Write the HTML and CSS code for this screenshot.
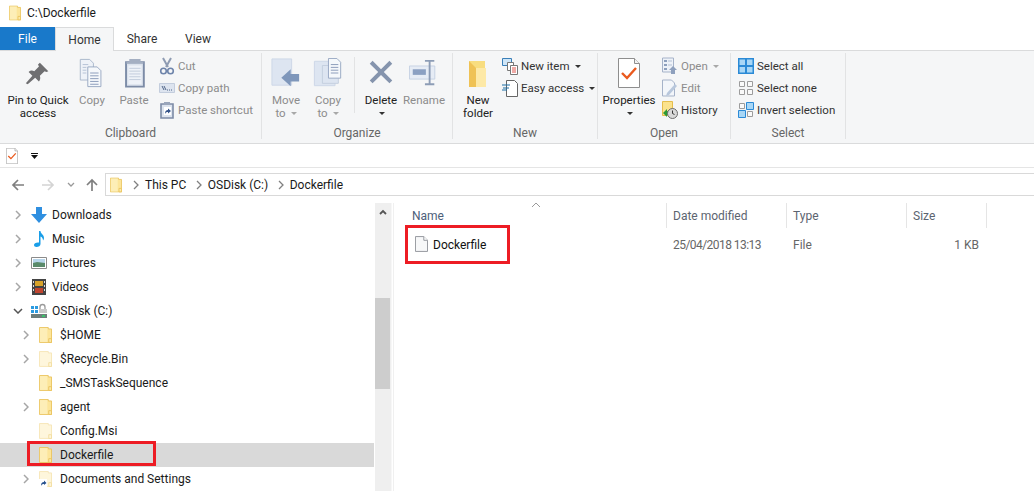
FILE: index.html
```html
<!DOCTYPE html>
<html lang="en">
<head>
<meta charset="utf-8">
<title>C:\Dockerfile</title>
<link rel="stylesheet" href="styles.css">
</head>
<body>
<svg class="defs" width="0" height="0" aria-hidden="true">
  <defs>
    <symbol id="folder" viewBox="0 0 14 17">
      <path d="M.5.5h9.500v1.500h3.500v14.500H.5z" fill="#fce59a" stroke="#eac45e"/>
      <path d="M1 1h8v15H1z" fill="#fdeeb7"/>
      <path d="M10.500 12.500h3v4h-3z" fill="#fce9a9" stroke="#eac45e"/>
    </symbol>
    <symbol id="folder-dim" viewBox="0 0 14 17">
      <path d="M.5.5h9.500v1.500h3.500v14.500H.5z" fill="#fef6dc" stroke="#f6e5b5"/>
      <path d="M10.500 12.500h3v4h-3z" fill="#fef6dc" stroke="#f2dda0"/>
    </symbol>
    <symbol id="page" viewBox="0 0 14 17">
      <path d="M.5.5h9l4 4v12H.5z" fill="#f7f8f9" stroke="#8f9298"/>
      <path d="M9.500.5v4h4" fill="#fff" stroke="#8f9298"/>
    </symbol>
    <symbol id="props" viewBox="0 0 22 30">
      <path d="M.5.5h16l5 5v24H.5z" fill="#fff" stroke="#8e8e8e"/>
      <path d="M16.500.5v5h5" fill="#f2f2f2" stroke="#8e8e8e"/>
      <path d="M4 15l5 5 9-10" fill="none" stroke="#ea5a1e" stroke-width="2.400"/>
    </symbol>
  </defs>
</svg>

<header class="title">
  <svg class="i-title"><use href="#folder"/></svg>
  <span>C:\Dockerfile</span>
</header>

<nav class="tabs">
  <span class="tab file">File</span>
  <span class="tab home">Home</span>
  <span class="tab share">Share</span>
  <span class="tab view">View</span>
</nav>

<section class="ribbon">
  <div class="group g-clip">
    <div class="body">
      <div class="big w-pin">
        <svg class="ico" viewBox="0 0 32 32"><path d="M18 5l9 9-2 1-2-1-5 5c1 3 0 5-1 6l-4-4-8 7-2-1 7-8-4-4c2-2 4-2 6-1l5-5-1-2z" fill="#6f6f71"/></svg>
        <span class="lbl">Pin to Quick<br>access</span>
      </div>
      <div class="big w-copy off">
        <svg class="ico" viewBox="0 0 32 32"><path d="M3.500 1.500h10l4 4v18h-14z" fill="#eef2f8" stroke="#a9b6cb"/><path d="M11.500 9.500h10l4 4v17h-14z" fill="#f5f8fb" stroke="#98a8c2"/><path d="M14 16h9M14 19h9M14 22h9M14 25h9M14 28h9" stroke="#8799b7"/><path d="M6 7h6M6 10h4M6 13h4M6 16h4" stroke="#b3c0d4"/></svg>
        <span class="lbl">Copy</span>
      </div>
      <div class="big w-paste off">
        <svg class="ico" viewBox="0 0 32 32"><path d="M7.500 4.500h19v26h-19z" fill="#dbe2ec" stroke="#7c8ba6" stroke-width="2"/><path d="M11 1h12v3h3v2H8V4h3z" fill="#a4afc2"/><path d="M10 8h14v20H10z" fill="#eef2f8"/><path d="M11 11h12M11 14h12M11 17h12M11 20h12M11 23h12" stroke="#c1cbdb"/></svg>
        <span class="lbl">Paste</span>
      </div>
      <ul class="list off l-clip">
        <li>
          <svg class="sm" viewBox="0 0 16 18"><path d="M4 1l5 9M12 1L7 10" stroke="#8f9cb3" stroke-width="2" fill="none"/><circle cx="4.500" cy="14" r="2.800" fill="none" stroke="#6f85ab" stroke-width="1.600"/><circle cx="11.500" cy="14" r="2.800" fill="none" stroke="#6f85ab" stroke-width="1.600"/></svg>
          <span>Cut</span>
        </li>
        <li>
          <svg class="sm" viewBox="0 0 16 18"><path d="M.5 4.500h15v9H.5z" fill="#dde4ef" stroke="#c3cddd"/><path d="M3 7l2 4M5 7l2 4M8 11h1M10 11h1M12 11h1" stroke="#4f6488"/></svg>
          <span>Copy path</span>
        </li>
        <li>
          <svg class="sm" viewBox="0 0 16 18"><path d="M2 3h12v14H2z" fill="#dce3ee" stroke="#7c8ba6" stroke-width="1.600"/><path d="M5 1h6v3H5z" fill="#9aa6bb"/><path d="M5 6h7v8H5z" fill="#fff"/><path d="M6 13c0-3 1-4 3-4V7.500l3 2.500-3 2.500V11c-1 0-2 0-3 2z" fill="#34538a"/></svg>
          <span>Paste shortcut</span>
        </li>
      </ul>
    </div>
    <div class="name">Clipboard</div>
  </div>

  <div class="group g-org">
    <div class="body">
      <div class="big w-move off">
        <svg class="ico" viewBox="0 0 32 32"><path d="M1 1h21v28H1z" fill="#dde5f1" stroke="#ccd6e6"/><path d="M11 21l10-9v5h9v8h-9v5z" fill="#7f97bb"/></svg>
        <span class="lbl">Move<br>to <i class="caret"></i></span>
      </div>
      <div class="big w-copyto off">
        <svg class="ico" viewBox="0 0 32 32"><path d="M1.500 3.500h22v26h-22z" fill="#dde5f1" stroke="#ccd6e6"/><path d="M10 8h17v19H10z" fill="#dde5f1" stroke="#c3cede"/><path d="M16.500.5h9l4 4v17h-13z" fill="#f5f8fb" stroke="#98a8c2"/><path d="M19 7h8M19 10h8M19 13h8M19 16h8" stroke="#8799b7"/></svg>
        <span class="lbl">Copy<br>to <i class="caret"></i></span>
      </div>
      <span class="vsep"></span>
      <div class="big w-del">
        <svg class="ico" viewBox="0 0 32 32"><path d="M5 7l3-3 9 9 9-9 3 3-9 9 9 9-3 3-9-9-9 9-3-3 9-9z" transform="translate(-1 -1)" fill="#8594ad"/></svg>
        <span class="lbl">Delete<br><i class="caret dark"></i></span>
      </div>
      <div class="big w-ren off">
        <svg class="ico" viewBox="0 0 32 32"><path d="M.5 8.500h27v14H.5z" fill="#e6ecf5" stroke="#c5d1e2"/><path d="M4 12h14v6H4z" fill="#8ba0c2"/><path d="M17 3h5v25h-5M27 3h-5M27 28h-5" fill="none" stroke="#8d9db6" stroke-width="2"/></svg>
        <span class="lbl">Rename</span>
      </div>
    </div>
    <div class="name">Organize</div>
  </div>

  <div class="group g-new">
    <div class="body">
      <div class="big w-folder">
        <svg class="ico folder-big" viewBox="0 0 20 28"><path d="M1 1h16v26H1z" fill="#f8dd7f"/><path d="M7 8l11 0v19H7z" fill="#fde9a7"/><path d="M1 1l7 7v19L1 27z" fill="#efc255"/></svg>
        <span class="lbl">New<br>folder</span>
      </div>
      <ul class="list l-new">
        <li>
          <svg class="sm" viewBox="0 0 16 18"><path d="M.5 1.500h9v7h-9z" fill="#cfe6f8" stroke="#3a7fb8"/><path d="M5.500 5.500h6v8h-6z" fill="#fff" stroke="#777"/><path d="M8.500 8.500h7v9h-7z" fill="#fff" stroke="#777"/><path d="M10 11h4M10 13h4M10 15h4" stroke="#e0544d"/></svg>
          <span>New item</span><i class="caret dark"></i>
        </li>
        <li>
          <svg class="sm" viewBox="0 0 16 18"><path d="M4.500 1.500h8l3 3v13h-11z" fill="#fff" stroke="#666"/><path d="M0 6h8M1 9h6M0 11h5" stroke="#1d6fa5" stroke-width="1.200"/></svg>
          <span>Easy access</span><i class="caret dark"></i>
        </li>
      </ul>
    </div>
    <div class="name">New</div>
  </div>

  <div class="group g-open">
    <div class="body">
      <div class="big w-props">
        <svg class="ico props-big"><use href="#props"/></svg>
        <span class="lbl">Properties<br><i class="caret dark"></i></span>
      </div>
      <ul class="list l-open">
        <li class="off">
          <svg class="sm" viewBox="0 0 16 18"><path d="M.5 1h11v14H.5z" fill="#eef2f8" stroke="#a6b3c9"/><path d="M2 3h3v2H2zM2 7h3v2H2zM2 11h3v2H2z" fill="#8ea0bd"/><path d="M6 4h4M6 8h4" stroke="#b3c0d4"/><path d="M11 9l4 4h-2v4h-4v-4H7z" fill="#8ea0bd"/></svg>
          <span>Open</span><i class="caret"></i>
        </li>
        <li class="off">
          <svg class="sm" viewBox="0 0 16 18"><path d="M.5 1h9l3 3v13H.5z" fill="#f3f6fa" stroke="#a6b3c9"/><path d="M5 14l8-9 2 2-8 9-3 1z" fill="#b8c7dc"/></svg>
          <span>Edit</span>
        </li>
        <li>
          <svg class="sm" viewBox="0 0 16 18"><path d="M.5 .5h10v14H.5z" fill="#fbe28c" stroke="#e5bd4c"/><path d="M1 12l4-4v2h3v4H5v2z" fill="#2b9a35"/><circle cx="10.500" cy="12.500" r="5" fill="#d8d8d8" stroke="#6c6c6c"/><path d="M10.500 9.500v3l2 1" fill="none" stroke="#333"/></svg>
          <span>History</span>
        </li>
      </ul>
    </div>
    <div class="name">Open</div>
  </div>

  <div class="group g-sel">
    <div class="body">
      <ul class="list l-sel">
        <li>
          <svg class="sm" viewBox="0 0 16 16"><path d="M0 0h16v16H0z" fill="#2b8ad6"/><path d="M1.500 1.500h5.500v5.500H1.500zM9 1.500h5.500v5.500H9zM1.500 9h5.500v5.500H1.500zM9 9h5.500v5.500H9z" fill="#a9d7f6"/></svg>
          <span>Select all</span>
        </li>
        <li>
          <svg class="sm" viewBox="0 0 16 16"><path d="M1.500 1.500h5v5h-5zM9.500 1.500h5v5h-5zM1.500 9.500h5v5h-5zM9.500 9.500h5v5h-5z" fill="#fafafa" stroke="#9c9c9c"/></svg>
          <span>Select none</span>
        </li>
        <li>
          <svg class="sm" viewBox="0 0 16 16"><path d="M1.500 1.500h5v5h-5zM9.500 9.500h5v5h-5z" fill="#fafafa" stroke="#9c9c9c"/><path d="M8.500.5h7v7h-7zM.5 8.500h7v7h-7z" fill="#a9d7f6" stroke="#2b8ad6"/></svg>
          <span>Invert selection</span>
        </li>
      </ul>
    </div>
    <div class="name">Select</div>
  </div>
</section>

<div class="qat">
  <svg class="i-qat"><use href="#props"/></svg>
  <svg class="qat-more" viewBox="0 0 8 6"><path d="M0 0h7v1H0zM0 2h7L3.500 6z" fill="#111"/></svg>
</div>

<div class="navbar">
  <div class="navbtns">
    <svg class="nb" viewBox="0 0 14 14"><path d="M13 7H2M7 2L2 7l5 5" fill="none" stroke="#7f7f7f" stroke-width="1.700"/></svg>
    <svg class="nb" viewBox="0 0 14 14"><path d="M1 7h11M7 2l5 5-5 5" fill="none" stroke="#d4d4d4" stroke-width="1.700"/></svg>
    <svg class="nb-down" viewBox="0 0 8 6"><path d="M1 1l3 3 3-3" fill="none" stroke="#999" stroke-width="1.300"/></svg>
    <svg class="nb" viewBox="0 0 14 14"><path d="M7 13V2M2 7l5-5 5 5" fill="none" stroke="#7f7f7f" stroke-width="1.700"/></svg>
  </div>
  <div class="address">
    <svg class="i-addr"><use href="#folder"/></svg>
    <svg class="crumb" viewBox="0 0 6 10"><path d="M1 1l4 4-4 4" fill="none" stroke="#808080" stroke-width="1.300"/></svg>
    <span>This PC</span>
    <svg class="crumb" viewBox="0 0 6 10"><path d="M1 1l4 4-4 4" fill="none" stroke="#808080" stroke-width="1.300"/></svg>
    <span>OSDisk (C:)</span>
    <svg class="crumb" viewBox="0 0 6 10"><path d="M1 1l4 4-4 4" fill="none" stroke="#808080" stroke-width="1.300"/></svg>
    <span>Dockerfile</span>
  </div>
</div>

<main class="main">
  <div class="tree">
    <div class="row">
      <svg class="tw" viewBox="0 0 6 10"><path d="M1 1l4 4-4 4" fill="none" stroke="#a6a6a6" stroke-width="1.500"/></svg>
      <svg class="ti" viewBox="0 0 16 16"><path d="M5 0h6v7h5l-8 9-8-9h5z" fill="#2f8fe0"/></svg>
      <span>Downloads</span>
    </div>
    <div class="row">
      <svg class="tw" viewBox="0 0 6 10"><path d="M1 1l4 4-4 4" fill="none" stroke="#a6a6a6" stroke-width="1.500"/></svg>
      <svg class="ti" viewBox="0 0 16 16"><path d="M8 0h1.500c0 3 3.500 3.500 3.500 7 0 1-.5 2-1 2.500 0-2-1-3.500-2.500-4V13c0 2-2 3-4 3-1.500 0-2.500-.7-2.500-2 0-1.700 2-2.800 5-2.500z" fill="#1a9ee8"/></svg>
      <span>Music</span>
    </div>
    <div class="row">
      <svg class="tw" viewBox="0 0 6 10"><path d="M1 1l4 4-4 4" fill="none" stroke="#a6a6a6" stroke-width="1.500"/></svg>
      <svg class="ti" viewBox="0 0 16 16"><path d="M.5 2.500h15v11H.5z" fill="#fff" stroke="#8b8b8b"/><path d="M2 4h12v4H2z" fill="#b7d5ea"/><path d="M2 8l4-1 8 1v4H2z" fill="#5a8a6a"/></svg>
      <span>Pictures</span>
    </div>
    <div class="row">
      <svg class="tw" viewBox="0 0 6 10"><path d="M1 1l4 4-4 4" fill="none" stroke="#a6a6a6" stroke-width="1.500"/></svg>
      <svg class="ti" viewBox="0 0 16 16"><path d="M1 0h14v16H1z" fill="#444"/><path d="M4 2h8v5H4z" fill="#d8a32a"/><path d="M4 9h8v5H4z" fill="#c0452f"/><path d="M2 2h1v2H2zM2 6h1v2H2zM2 10h1v2H2zM13 2h1v2h-1zM13 6h1v2h-1zM13 10h1v2h-1z" fill="#ddd"/></svg>
      <span>Videos</span>
    </div>
    <div class="row">
      <svg class="tw open" viewBox="0 0 10 6"><path d="M1 1l4 4 4-4" fill="none" stroke="#555" stroke-width="1.500"/></svg>
      <svg class="ti" viewBox="0 0 16 16"><path d="M0 3h3v3H0zM4 3h3v3H4zM0 7h3v3H0zM4 7h3v3H4z" fill="#2b9be0"/><path d="M9 6V4a2.500 2.500 0 0 1 5 0v2" fill="none" stroke="#9a9a9a" stroke-width="1.300"/><path d="M8 6h8v4H8z" fill="#c9c9c9"/><path d="M0 11h16v4H0z" fill="#6d7d7a"/><path d="M11 12h3v2h-3z" fill="#3cc26a"/></svg>
      <span>OSDisk (C:)</span>
    </div>
    <div class="row lvl">
      <svg class="tw" viewBox="0 0 6 10"><path d="M1 1l4 4-4 4" fill="none" stroke="#a6a6a6" stroke-width="1.500"/></svg>
      <svg class="tf"><use href="#folder"/></svg>
      <span>$HOME</span>
    </div>
    <div class="row lvl">
      <svg class="tw" viewBox="0 0 6 10"><path d="M1 1l4 4-4 4" fill="none" stroke="#a6a6a6" stroke-width="1.500"/></svg>
      <svg class="tf"><use href="#folder-dim"/></svg>
      <span>$Recycle.Bin</span>
    </div>
    <div class="row lvl">
      <i class="tw"></i>
      <svg class="tf"><use href="#folder"/></svg>
      <span>_SMSTaskSequence</span>
    </div>
    <div class="row lvl">
      <svg class="tw" viewBox="0 0 6 10"><path d="M1 1l4 4-4 4" fill="none" stroke="#a6a6a6" stroke-width="1.500"/></svg>
      <svg class="tf"><use href="#folder"/></svg>
      <span>agent</span>
    </div>
    <div class="row lvl">
      <i class="tw"></i>
      <svg class="tf"><use href="#folder-dim"/></svg>
      <span>Config.Msi</span>
    </div>
    <div class="row lvl selected">
      <i class="tw"></i>
      <svg class="tf"><use href="#folder"/></svg>
      <span>Dockerfile</span>
      <i class="mark mark-tree"></i>
    </div>
    <div class="row lvl">
      <svg class="tw" viewBox="0 0 6 10"><path d="M1 1l4 4-4 4" fill="none" stroke="#a6a6a6" stroke-width="1.500"/></svg>
      <span class="tf-wrap">
        <svg class="tf"><use href="#folder-dim"/></svg>
        <svg class="link" viewBox="0 0 8 8"><path d="M0 0h8v8H0z" fill="#fff"/><path d="M2 7c0-3 1-4 3-4V1.500L7.500 4 5 6V5C4 5 3 5 2 7z" fill="#27518f"/></svg>
      </span>
      <span>Documents and Settings</span>
    </div>
  </div>
  <div class="scroll">
    <svg class="sc-up" viewBox="0 0 8 6"><path d="M1 5l3-3 3 3" fill="none" stroke="#555" stroke-width="1.800"/></svg>
    <div class="thumb"></div>
  </div>
  <div class="files">
    <div class="sort"><svg viewBox="0 0 10 6" class="sort-i"><path d="M1 5l4-4 4 4" fill="none" stroke="#9a9a9a"/></svg></div>
    <div class="cols head">
      <div class="c-name"><span class="h-name">Name</span></div>
      <div class="c-date cell">Date modified</div>
      <div class="c-type cell">Type</div>
      <div class="c-size cell">Size</div>
    </div>
    <div class="cols frow">
      <div class="c-name fname">
        <svg class="fi"><use href="#page"/></svg>
        <span>Dockerfile</span>
        <i class="mark mark-file"></i>
      </div>
      <div class="c-date val stamp">25/04/2018 13:13</div>
      <div class="c-type val">File</div>
      <div class="c-size val right">1 KB</div>
    </div>
  </div>
</main>
</body>
</html>
```

FILE: styles.css
```css
* { box-sizing: border-box; }
html, body { margin: 0; height: 491px; overflow: hidden; background: #fff; }
body { font: 12px/16px Roboto, "Liberation Sans", sans-serif; color: #1a1a1a; }
.defs { position: absolute; }
svg { display: block; flex: none; }
i { font-style: normal; }

.title { height: 27px; display: flex; align-items: center; gap: 6px; padding: 0 0 2px 9px; }
.i-title { width: 12px; height: 16px; }

.tabs { height: 23px; display: flex; color: #333; line-height: 25px; position: relative; }
.tab { display: block; text-align: center; }
.file { width: 55px; background: #1979ca; color: #fff; }
.home { width: 59px; background: #f5f6f7; border: 1px solid #dadbdc; border-bottom: 0; height: 24px; margin-bottom: -1px; position: relative; z-index: 1; line-height: 24px; }
.share { width: 56px; }
.view { width: 56px; }

.ribbon { height: 94px; display: flex; background: #f5f6f7; border-top: 1px solid #dadbdc; border-bottom: 1px solid #dadbdc; padding-top: 2px; color: #3c3c3c; font-size: 11.5px; }
.group { display: flex; flex-direction: column; border-right: 1px solid #e2e3e4; height: 86px; }
.g-clip { width: 262px; padding-left: 6px; }
.g-org { width: 191px; padding-left: 2px; }
.g-new { width: 145px; padding-left: 4px; }
.g-open { width: 133px; padding-left: 4px; }
.g-sel { width: 115px; padding-left: 7px; }
.body { flex: 1; display: flex; min-height: 0; }
.name { height: 16px; line-height: 20px; text-align: center; color: #666; margin-left: -6px; font-size: 12px; }
.g-org .name { margin-left: -2px; }
.g-new .name { margin-left: -4px; }
.g-open .name { margin-left: -4px; }
.g-sel .name { margin-left: -7px; }

.big { display: flex; flex-direction: column; align-items: center; text-align: center; line-height: 13px; }
.ico { width: 30px; height: 30px; margin: 5px 0 6px; }
.ico.folder-big { width: 20px; height: 28px; margin: 7px 0 6px; }
.ico.props-big { width: 22px; height: 30px; margin: 5px 0 6px; }
.lbl { display: block; color: #222; white-space: nowrap; }
.off, .off .lbl { color: #8c8c8c; }
.w-pin { width: 64px; }
.w-copy { width: 44px; }
.w-paste { width: 40px; }
.w-move { width: 44px; }
.w-copyto { width: 40px; }
.w-del { width: 42px; }
.w-ren { width: 44px; }
.w-folder { width: 42px; }
.w-props { width: 54px; }
.vsep { width: 1px; height: 56px; background: #e2e3e4; margin: 4px 5px 0 6px; }

.caret { display: inline-block; vertical-align: middle; width: 0; height: 0; border: 3px solid transparent; border-top: 3px solid #a8a8a8; border-bottom: 0; margin-left: 2px; }
.caret.dark { border-top-color: #333; }

.list { list-style: none; margin: 0; padding: 0; }
.list li { height: 22px; display: flex; align-items: center; white-space: nowrap; color: #333; }
.list li span { margin-right: 3px; }
.list.off li { color: #8c8c8c; }
.list li.off { color: #8c8c8c; }
.sm { width: 16px; height: 18px; margin-right: 3px; }
.l-clip { margin: 2px 0 0 5px; }
.l-new { margin: 2px 0 0 3px; }
.l-open { margin: 2px 0 0 6px; }
.l-sel { margin: 2px 0 0 0; }
.l-sel .sm { height: 16px; }

.qat { height: 24px; display: flex; align-items: center; border-bottom: 1px solid #e5e5e5; padding-left: 6px; gap: 13px; }
.i-qat { width: 12px; height: 16px; }
.qat-more { width: 8px; height: 6px; }

.navbar { height: 29px; display: flex; align-items: flex-start; padding-top: 5px; }
.navbtns { width: 105px; height: 23px; display: flex; align-items: center; padding-left: 11px; }
.nb { width: 14px; height: 14px; }
.nb:nth-child(1) { margin-right: 16px; }
.nb-down { width: 8px; height: 6px; margin: 0 10px 0 12px; }
.address { flex: 1; height: 23px; display: flex; align-items: center; border: 1px solid #d9d9d9; border-right: 0; padding-left: 4px; color: #1a1a1a; }
.i-addr { width: 12px; height: 16px; margin-right: 11px; }
.crumb { width: 6px; height: 10px; margin: 0 6px 0 0; }
.address span { margin-right: 9.5px; }

.main { display: flex; height: 295px; padding-top: 6px; }
.tree { width: 374px; }
.row { height: 24px; display: flex; align-items: center; position: relative; padding-left: 15px; white-space: nowrap; color: #1a1a1a; }
.row.lvl { padding-left: 23px; }
.row.selected { background: #d9d9d9; }
.tw { width: 6px; height: 10px; display: block; margin-right: 10px; flex: none; }
.tw.open { width: 10px; height: 6px; margin: 0 8px 0 -2px; }
.ti { width: 16px; height: 16px; margin-right: 5px; }
.tf { width: 13px; height: 16px; margin-right: 8px; }
.tf-wrap { position: relative; display: block; }
.link { position: absolute; left: 0; bottom: 0; width: 8px; height: 8px; }
.mark { position: absolute; display: block; border: 3px solid #ed1c24; pointer-events: none; }
.mark-tree { left: 27px; top: -2px; width: 129px; height: 25px; }
.mark-file { left: 11px; top: -12px; width: 105px; height: 39px; }

.scroll { width: 17px; background: #efefef; margin-left: 1px; position: relative; border-right: 1px solid #f7f7f7; }
.sc-up { width: 8px; height: 6px; position: absolute; left: 4px; top: 6px; }
.thumb { position: absolute; left: 0; top: 95px; width: 15px; height: 91px; background: #cdcdcd; }

.files { flex: 1; position: relative; border-left: 1px solid #f0f0f0; margin-left: 1px; }
.sort { position: absolute; left: 137px; top: -1px; }
.sort-i { width: 10px; height: 6px; }
.cols { display: flex; }
.head { height: 25px; align-items: stretch; line-height: 26px; color: #5c6470; }
.c-name { width: 272px; padding-left: 18px; position: relative; }
.c-date { width: 120px; padding-left: 7px; }
.c-type { width: 120px; padding-left: 7px; }
.c-size { width: 81px; padding-left: 7px; }
.cell { padding-left: 6px; }
.h-name { color: #4c607a; }
.cell { border-left: 1px solid #e5e5e5; }
.c-size.cell { border-right: 1px solid #e5e5e5; }
.frow { height: 34px; padding-top: 9px; line-height: 16px; }
.fname { display: flex; align-items: flex-start; padding-left: 21px; height: 17px; color: #111; }
.fi { width: 13px; height: 16px; margin: -1px 5px 0 0; }
.val { color: #666; }
.stamp { letter-spacing: -.55px; }
.right { text-align: right; padding-right: 8px; }
```
